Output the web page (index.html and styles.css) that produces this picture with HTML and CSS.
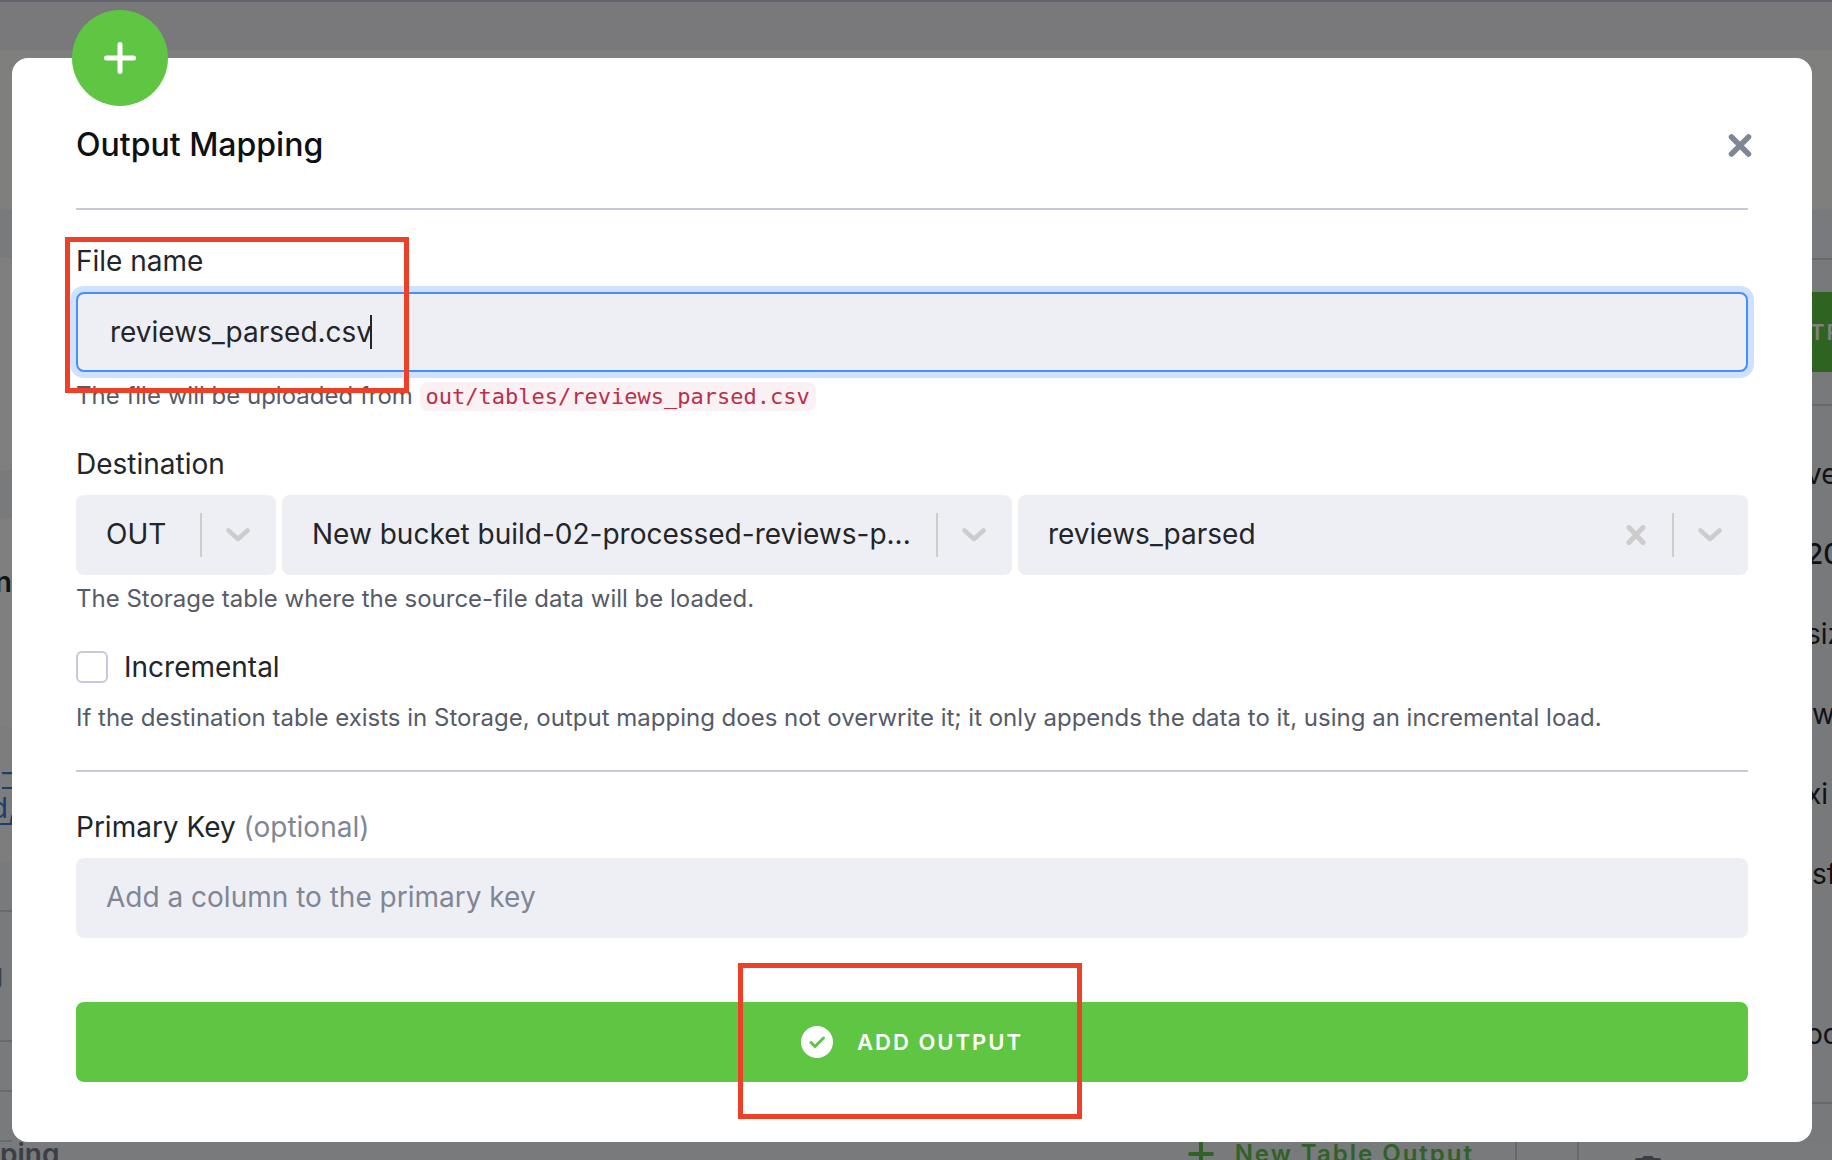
FILE: index.html
```html
<!DOCTYPE html>
<html lang="en">
<head>
<meta charset="utf-8">
<title>Output Mapping</title>
<meta name="viewport" content="width=device-width, initial-scale=1">
<link rel="stylesheet" href="styles.css">
</head>
<body>
<div class="page" aria-hidden="true">
  <div class="page-top"></div>
  <div class="page-head"></div>
  <div class="page-body">
    <div class="page-left">
      <div class="card card-first"></div>
      <div class="card card-config"><span class="card-title">n</span></div>
      <div class="card-shade"><span class="link">–</span><span class="link">d,</span></div>
      <div class="list-row row-blank"></div>
      <div class="list-row row-title">g</div>
      <div class="list-row row-small"></div>
      <div class="list-row"></div>
    </div>
    <div class="page-right">
      <div class="side-run"><div class="run-btn">TR</div></div>
      <div class="side-list">
        <span>ve</span><span class="strong">20</span><span>siz</span><span class="indent">w</span><span>xi</span><span class="indent">sf</span><span></span><span>od</span>
      </div>
    </div>
  </div>
  <div class="page-foot">
    <span class="foot-title">ping</span>
    <span class="new-output">
      <svg width="28" height="28" viewBox="0 0 28 28"><path d="M14 1v22M3 12h22" stroke="currentColor" stroke-width="4" stroke-linecap="round"/></svg>
      New Table Output
    </span>
    <span class="foot-cell"></span>
    <span class="foot-cell foot-trash">
      <svg width="28" height="28" viewBox="0 0 28 28"><path d="M1 5q0-2 2-2h5l2-2h8l2 2h5q2 0 2 2v1H1zM3 8h22l-1 18H4z" fill="currentColor"/></svg>
    </span>
  </div>
</div>

<div class="backdrop">
  <form class="modal" role="dialog" aria-labelledby="title">
    <span class="badge">
      <svg width="32" height="32" viewBox="0 0 32 32"><path d="M16 2.500v27M2.500 16h27" stroke="#fff" stroke-width="5" stroke-linecap="round"/></svg>
    </span>
    <header class="modal-head">
      <h1 id="title">Output Mapping</h1>
      <button type="button" class="icon-btn close" aria-label="Close">
        <svg width="24" height="24" viewBox="0 0 24 24"><path d="M3.500 4l17 17M20.500 4l-17 17" stroke="currentColor" stroke-width="5.500" stroke-linecap="round"/></svg>
      </button>
    </header>

    <div class="field field-file">
      <label for="file">File name</label>
      <div class="input-wrap">
        <input id="file" class="box file-input" type="text" value="reviews_parsed.csv">
        <span class="caret"></span>
      </div>
      <p class="help">The file will be uploaded from <code>out/tables/reviews_parsed.csv</code></p>
      <span class="mark mark-file"></span>
    </div>

    <div class="field">
      <label for="table">Destination</label>
      <div class="selects">
        <div class="box select">
          <select aria-label="Stage"><option>OUT</option></select>
          <span class="sep"></span>
          <svg class="chev" width="24" height="16" viewBox="0 0 24 16"><path d="M2.500 3.500l9.500 8.500 9.500-8.500" fill="none" stroke="currentColor" stroke-width="4.500" stroke-linecap="round" stroke-linejoin="round"/></svg>
        </div>
        <div class="box select">
          <select aria-label="Bucket"><option>New bucket build-02-processed-reviews-p...</option></select>
          <span class="sep"></span>
          <svg class="chev" width="24" height="16" viewBox="0 0 24 16"><path d="M2.500 3.500l9.500 8.500 9.500-8.500" fill="none" stroke="currentColor" stroke-width="4.500" stroke-linecap="round" stroke-linejoin="round"/></svg>
        </div>
        <div class="box select">
          <select id="table"><option>reviews_parsed</option></select>
          <button type="button" class="icon-btn clear" aria-label="Clear">
            <svg width="20" height="20" viewBox="0 0 20 20"><path d="M3 2.500l14 15M17 2.500l-14 15" stroke="currentColor" stroke-width="5" stroke-linecap="round"/></svg>
          </button>
          <span class="sep"></span>
          <svg class="chev" width="24" height="16" viewBox="0 0 24 16"><path d="M2.500 3.500l9.500 8.500 9.500-8.500" fill="none" stroke="currentColor" stroke-width="4.500" stroke-linecap="round" stroke-linejoin="round"/></svg>
        </div>
      </div>
      <p class="help">The Storage table where the source-file data will be loaded.</p>
    </div>

    <div class="field field-check">
      <label class="check"><input type="checkbox">Incremental</label>
      <p class="help">If the destination table exists in Storage, output mapping does not overwrite it; it only appends the data to it, using an incremental load.</p>
    </div>

    <div class="field field-key">
      <label for="key">Primary Key <span class="optional">(optional)</span></label>
      <input id="key" class="box key-input" type="text" placeholder="Add a column to the primary key">
    </div>

    <div class="submit-wrap">
      <button type="submit" class="submit">
        <svg width="32" height="32" viewBox="0 0 32 32"><circle cx="16" cy="16" r="16" fill="#fff"/><path d="M10 16.500l4 4 8.500-8.500" fill="none" stroke="#5fc643" stroke-width="3" stroke-linecap="round" stroke-linejoin="round"/></svg>
        ADD OUTPUT
      </button>
      <span class="mark mark-submit"></span>
    </div>
  </form>
</div>
</body>
</html>
```
FILE: styles.css
```css
* { box-sizing: border-box; }

body {
  margin: 0;
  font-family: Inter, "Liberation Sans", sans-serif;
  font-size: 28px;
  line-height: 40px;
  color: #222529;
  background: #eff5fb;
}

h1, p { margin: 0; }
svg { display: block; flex: none; }
input, select, button { font: inherit; color: inherit; }

/* Page behind the dialog */
.page {
  position: fixed;
  inset: 0;
  display: flex;
  flex-direction: column;
  overflow: hidden;
  background: #f0f5f9;
}
.page-top { flex: none; height: 50px; border-top: 2px solid #c5c8dc; background: #f2f3f6; }
.page-head { flex: none; height: 160px; background: #fffffc; }
.page-body {
  flex: none;
  height: 932px;
  display: flex;
  justify-content: space-between;
}
.page-left {
  width: 12px;
  display: flex;
  flex-direction: column;
  align-items: stretch;
  white-space: nowrap;
  padding-top: 48px;
}
.card { flex: none; background: #fff; }
.card-first { height: 212px; }
.card-config { height: 208px; margin-top: 48px; padding-top: 44px; }
.card-title { display: flex; justify-content: flex-end; font-weight: 600; }
.card-shade {
  flex: none;
  height: 136px;
  padding-top: 28px;
  margin-right: -4px;
  background: #fbfbfc;
  display: flex;
  flex-direction: column;
  align-items: flex-end;
  line-height: 36px;
}
.link { color: #377dde; text-decoration: underline; text-decoration-thickness: 2px; text-underline-offset: 5px; }
.list-row { flex: none; height: 50px; border-bottom: 2px solid #d0d3dc; }
.row-title {
  height: 130px;
  padding-top: 42px;
  display: flex;
  justify-content: flex-end;
  padding-right: 9px;
  font-weight: 600;
  color: #787d8c;
}
.page-right { width: 26px; background: #f1f2f6; white-space: nowrap; }
.side-run {
  height: 196px;
  padding-top: 48px;
  background: linear-gradient(#f0f5fa 48px, #d0d3dc 48px, #d0d3dc 50px, #f1f2f6 50px);
  border-bottom: 2px solid #d0d3dc;
}
.run-btn {
  margin-top: 34px;
  height: 80px;
  padding-left: 4px;
  line-height: 80px;
  overflow: hidden;
  background: #5fc643;
  color: #fff;
  font-size: 22px;
  font-weight: 600;
  letter-spacing: 2px;
}
.side-list {
  height: 698px;
  padding-top: 28px;
  display: flex;
  flex-direction: column;
  border-bottom: 2px solid #d0d3dc;
}
.side-list span { height: 80px; line-height: 80px; overflow: hidden; flex: none; }
.side-list .strong { font-weight: 500; }
.side-list .indent { padding-left: 6px; }
.page-foot { flex: none; display: flex; height: 80px; justify-content: flex-end; white-space: nowrap; }
.foot-title { margin-right: auto; font-weight: 600; font-size: 28px; line-height: 24px; color: #787d8c; }
.new-output {
  display: flex;
  gap: 20px;
  padding-right: 41px;
  font-size: 24px;
  line-height: 24px;
  font-weight: 600;
  letter-spacing: 2px;
  color: #61c34f;
}
.foot-cell { width: 62px; border-left: 2px solid #d0d3dc; }
.foot-trash { width: 255px; padding: 13px 55px; color: #787d8c; }

/* Dialog */
.backdrop {
  position: relative;
  min-height: 100vh;
  padding: 58px 20px 18px 12px;
  background: rgba(0, 0, 0, .5);
}
.modal {
  position: relative;
  padding: 0 64px 60px;
  border-radius: 16px;
  background: #fff;
}
.badge {
  position: absolute;
  left: 60px;
  top: -48px;
  width: 96px;
  height: 96px;
  border-radius: 50%;
  display: grid;
  place-items: center;
  background: #5fc643;
}
.modal-head {
  height: 152px;
  padding-top: 24px;
  display: flex;
  align-items: center;
  justify-content: space-between;
  border-bottom: 2px solid #c5c9d9;
}
h1 { font-size: 32px; font-weight: 500; color: #0e1013; }
.icon-btn { padding: 4px; border: 0; background: none; color: #cccccc; }
.close { margin-right: -8px; color: #7f8796; }

.field { position: relative; padding-top: 32px; }
.field label { display: block; height: 50px; line-height: 38px; }
.help { font-size: 24px; line-height: 32px; padding-top: 8px; color: #565b67; }
code {
  padding: 2px 6px;
  border-radius: 8px;
  font-family: "DejaVu Sans Mono", monospace;
  font-size: 22px;
  color: #b92f4b;
  background: #f9f1f3;
}
.box {
  display: block;
  width: 100%;
  height: 80px;
  border: 0;
  border-radius: 8px;
  outline: 0;
  background: #eeeff4;
}
.input-wrap { position: relative; }
.file-input {
  padding: 0 32px;
  border: 2px solid #438ffc;
  box-shadow: 0 0 0 6px #cfe1ff;
  caret-color: transparent;
}
.caret {
  position: absolute;
  left: 294px;
  top: 23px;
  width: 2px;
  height: 34px;
  background: #222529;
}
.selects { display: grid; grid-template-columns: 200px 1fr 1fr; gap: 6px; }
.select { display: flex; align-items: center; color: #cccccc; min-width: 0; }
.select select {
  flex: 1;
  min-width: 0;
  height: 80px;
  padding: 0 0 2px 30px;
  border: 0;
  background: none;
  appearance: none;
  outline: 0;
  color: #222529;
}
.sep { flex: none; width: 2px; height: 44px; background: #cccccc; }
.chev { margin: 0 26px 0 24px; }
.clear { margin-right: 22px; }
.field-check { padding-bottom: 36px; border-bottom: 2px solid #c5c9d9; }
.field .check { display: flex; align-items: center; gap: 16px; height: 40px; }
.check input {
  appearance: none;
  width: 32px;
  height: 32px;
  margin: 0;
  border: 2px solid #c5c9d9;
  border-radius: 6px;
  background: #fff;
}
.field-check .help { padding-top: 15px; }
.field-key { padding-top: 36px; }
.optional { color: #7f8796; }
.key-input { padding: 0 30px 2px; }
.key-input::placeholder { color: #7f8796; opacity: 1; }

.submit-wrap { position: relative; margin-top: 64px; }
.submit {
  display: flex;
  align-items: center;
  justify-content: center;
  gap: 24px;
  width: 100%;
  height: 80px;
  padding: 0;
  border: 0;
  border-radius: 8px;
  background: #5fc643;
  color: #fff;
  font-size: 22px;
  font-weight: 600;
  letter-spacing: 2px;
}

/* Red highlight frames */
.mark {
  position: absolute;
  width: 344px;
  height: 156px;
  border: 5px solid #ec4126;
  pointer-events: none;
}
.mark-file { left: -11px; top: 27px; }
.mark-submit { left: calc(50% - 174px); top: -39px; }
```
